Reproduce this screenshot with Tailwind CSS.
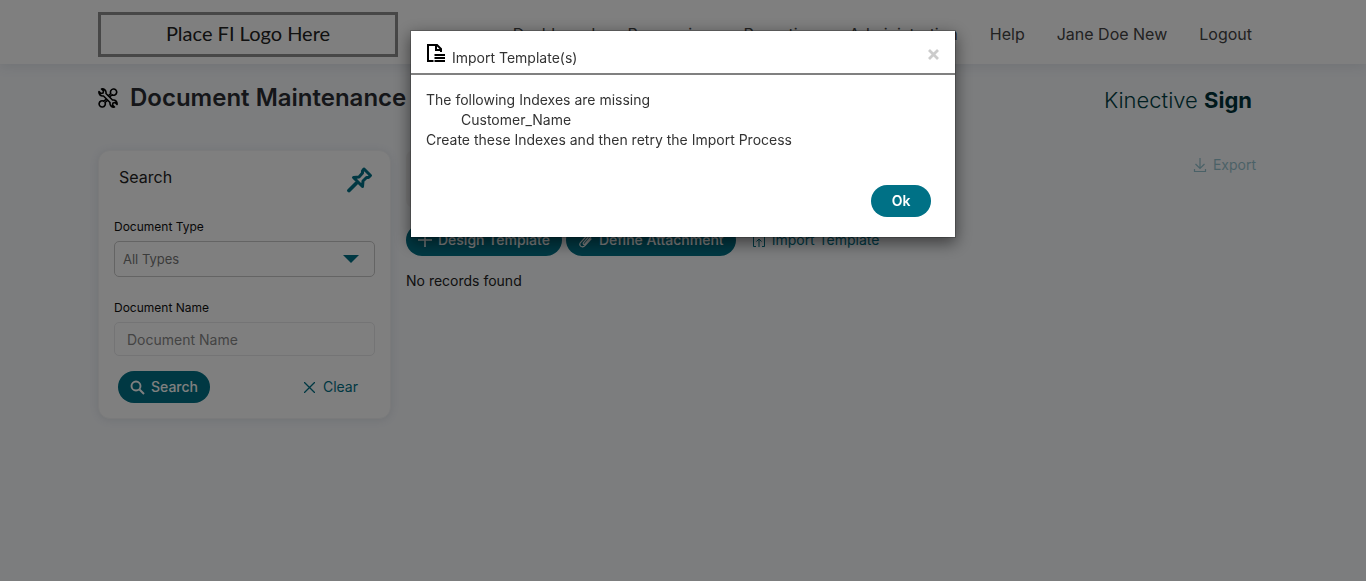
<!DOCTYPE html>
<html lang="en">
<head>
<meta charset="utf-8">
<meta name="viewport" content="width=device-width, initial-scale=1">
<title>Document Maintenance</title>
<script src="https://cdn.jsdelivr.net/npm/@tailwindcss/browser@4"></script>
</head>
<body class="min-h-screen bg-[#f8fafd] font-[Inter,'Liberation_Sans',sans-serif] text-[14px] leading-5 text-[#333]">
<header class="h-16 bg-white shadow-[0_2px_12px_rgba(60,70,100,0.12)]">
  <div class="mx-auto flex max-w-[1170px] justify-between pt-3">
    <div class="flex h-[45px] w-[300px] items-center justify-center border-3 border-[#8e8e8e] pb-1 font-[Lato,sans-serif] text-[20px] text-[#222]">Place FI Logo Here</div>
    <nav class="flex items-center gap-8 pr-4 pb-0.5 text-[16px] text-[#444]">
      <a href="#">Dashboard</a>
      <a href="#">Processing</a>
      <a href="#">Reporting</a>
      <a href="#">Administration</a>
      <a href="#">Help</a>
      <a href="#">Jane Doe New</a>
      <a href="#">Logout</a>
    </nav>
  </div>
</header>

<main class="mx-auto max-w-[1170px]">
  <div class="flex items-start justify-between pt-4 pr-4">
    <h1 class="flex items-center gap-3 text-[24px] leading-9 font-semibold text-[#2b2d33]">
      <svg class="size-5" viewBox="0 0 20 20" fill="none" stroke="#000" stroke-width="1.6" stroke-linejoin="round" aria-hidden="true">
        <path d="M3.500 1 5.500 3 5 5 3 5.500 1 3.500C.5 6 2.500 8.500 5.500 8L12 14.500C11.500 17.500 14 19.500 16.500 19L14.500 17 15 15 17 14.500 19 16.500C19.500 14 17.500 11.500 14.500 12L8 5.500C8.500 2.500 6 .5 3.500 1Z"/>
        <path d="M11.500 9 14 6.800A3.100 3.100 0 1 0 12.800 5.500L10 8M8.500 11 5.800 13.200A3.100 3.100 0 1 0 7 14.500L10 12"/>
      </svg>
      Document Maintenance
    </h1>
    <div class="pt-1 text-[22px] leading-8 font-light text-[#003f44]">Kinective <span class="font-bold text-[#003338]">Sign</span></div>
  </div>

  <div class="flex items-start gap-[15px] pt-[34px]">
    <section class="w-[293px] shrink-0 rounded-xl border border-[#f4f5f7] bg-white px-[15px] pb-[15px] shadow-[0_1px_8px_rgba(60,70,100,0.12)]">
      <div class="flex items-start justify-between pt-[14px] pl-[5px]">
        <h2 class="text-[16px] leading-6 text-[#222]">Search</h2>
        <button type="button" aria-label="Pin search" class="mr-0.5 size-7">
          <svg viewBox="0 0 28 28" fill="none" stroke="#007186" stroke-width="3" stroke-linejoin="round" stroke-linecap="round" aria-hidden="true">
            <path d="m19 4 6.500 6.500-2 2h-2l-3.500 3.500-.5 5.500-9-9 5.500-.5L17.500 8V6Z"/><path d="m11 18.500-7 7" stroke-width="3.800"/>
          </svg>
        </button>
      </div>
      <form class="pt-[26px]" onsubmit="return false">
        <label for="type" class="block text-[12px] leading-4 text-[#111]">Document Type</label>
        <div class="relative mt-1.5">
          <select id="type" class="h-9 w-full appearance-none rounded-[5px] border border-[#c8c8c8] px-2 text-[13px] text-[#777]"><option>All Types</option></select>
          <svg class="pointer-events-none absolute top-[14px] right-4 h-2 w-4" viewBox="0 0 16 8" fill="#007186" aria-hidden="true"><path d="M0 0h16L8 8Z"/></svg>
        </div>
        <label for="name" class="mt-[23px] block text-[12px] leading-4 text-[#111]">Document Name</label>
        <input id="name" type="text" placeholder="Document Name" class="mt-1.5 block h-[34px] w-full rounded-[5px] border border-[#e8e9eb] px-3 placeholder:text-[#888]">
        <div class="mt-[15px] flex items-center justify-between pr-[17px] pl-1">
          <button type="submit" class="flex h-8 items-center gap-1.5 rounded-full bg-[#007186] px-3 font-medium text-white">
            <svg class="size-[15px]" viewBox="0 0 15 15" fill="none" stroke="currentColor" stroke-width="1.900" aria-hidden="true"><circle cx="6" cy="6" r="4.500"/><path d="m9.500 9.500 4.500 4.500"/></svg>
            Search
          </button>
          <button type="reset" class="flex items-center gap-2 text-[#007186]">
            <svg class="size-[11px]" viewBox="0 0 11 11" stroke="currentColor" stroke-width="1.300" aria-hidden="true"><path d="m0 0 11 11M11 0 0 11"/></svg>
            Clear
          </button>
        </div>
      </form>
    </section>

    <section class="min-w-0 flex-1">
      <div class="flex h-[58px] justify-between">
        <div class="w-[540px] rounded-lg bg-[#f0f0f1]"></div>
        <button type="button" class="flex h-[30px] items-center gap-1.5 pr-3 text-[#007186]/40">
          <svg class="size-3.5" viewBox="0 0 14 14" fill="none" stroke="currentColor" stroke-width="1.200" aria-hidden="true"><path d="M7 0v10M2.500 6 7 10.500 11.500 6M1.500 11v2.500h11V11"/></svg>
          Export
        </button>
      </div>
      <div class="mt-4 flex items-center gap-1">
        <button type="button" class="flex h-8 items-center gap-1.5 rounded-full bg-[#007186] px-3 font-medium text-white">
          <svg class="size-3.5" viewBox="0 0 14 14" stroke="currentColor" stroke-width="1.500" aria-hidden="true"><path d="M7 0v14M0 7h14"/></svg>
          Design Template
        </button>
        <button type="button" class="flex h-8 items-center gap-1.5 rounded-full bg-[#007186] px-3 font-medium text-white">
          <svg class="size-[15px]" viewBox="0 0 15 15" fill="none" stroke="currentColor" stroke-width="1.200" stroke-linecap="round" aria-hidden="true"><path d="M10 4.500 5.500 9.500c-1 1.500.5 2.500 1.500 1.500l5.500-6.500c1.500-2.500-1-4.500-3-2.500L2.500 9.500c-2 3 1 5.500 4 3.500L13 6"/></svg>
          Define Attachment
        </button>
        <button type="button" class="ml-3 flex items-center gap-1.5 text-[#007186]">
          <svg class="size-3.5" viewBox="0 0 14 14" fill="none" stroke="currentColor" aria-hidden="true"><path d="M4 13.500H1.500v-13H9l3.500 3.500v9.500H10M7 14V6M4.500 8.500 7 6l2.500 2.500"/></svg>
          Import Template
        </button>
      </div>
      <p class="mt-[15px] text-[#222]">No records found</p>
    </section>
  </div>
</main>

<div class="fixed inset-0 bg-black/50">
  <div role="dialog" aria-modal="true" aria-labelledby="dialog-title" class="mx-auto mt-[30px] w-[546px] border border-black/20 bg-white bg-clip-padding shadow-[0_5px_15px_rgba(0,0,0,0.5)]">
    <div class="flex h-11 items-center justify-between border-b-2 border-[#808080] px-[15px] pt-1">
      <h2 id="dialog-title" class="flex items-end gap-1.5">
        <svg class="mb-[3px] size-5" viewBox="0 0 20 20" fill="none" stroke="#000" stroke-width="2" aria-hidden="true"><path d="M7.500 18H2V2h9l4 4v3"/><path d="M10 2v5h5"/><path d="M8.500 12h10.500M8.500 15h10.500M8.500 18h10.500" stroke-width="1.900"/></svg>
        <span class="-mb-0.5">Import Template(s)</span>
      </h2>
      <button type="button" aria-label="Close" class="size-3.5 text-[#ccc]">
        <svg viewBox="0 0 14 14" stroke="currentColor" stroke-width="2.800" aria-hidden="true"><path d="m3 3 9 9M12 3l-9 9"/></svg>
      </button>
    </div>
    <div class="px-[15px] pt-[15px] pb-5">
      <p>The following Indexes are missing</p>
      <p class="pl-[35px]">Customer_Name</p>
      <p>Create these Indexes and then retry the Import Process</p>
      <div class="flex justify-end pt-[35px] pr-[9px]"><button type="button" class="h-8 w-[60px] rounded-full bg-[#007186] font-semibold text-white">Ok</button></div>
    </div>
  </div>
</div>
</body>
</html>
